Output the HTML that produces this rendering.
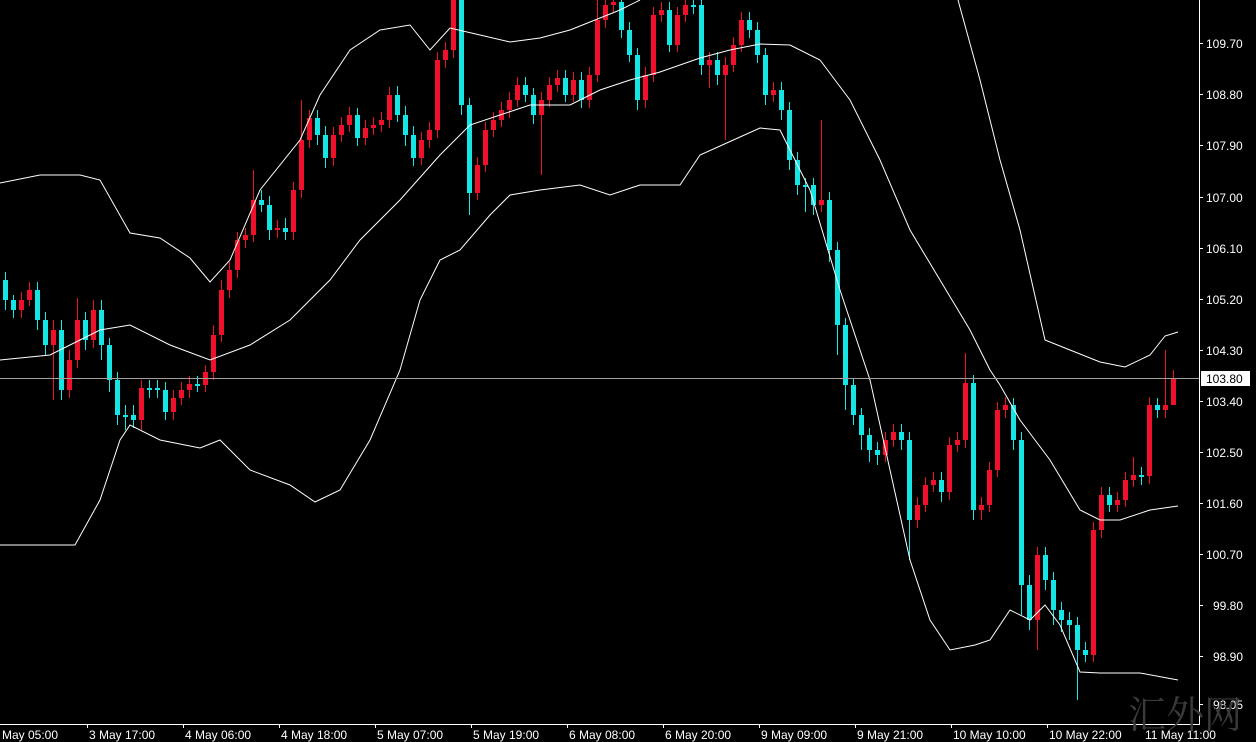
<!DOCTYPE html>
<html><head><meta charset="utf-8"><style>
html,body{margin:0;padding:0;background:#000;overflow:hidden}
svg{display:block}
text{font-family:"Liberation Sans",sans-serif;font-size:12px;fill:#fff}
</style></head><body>
<svg width="1256" height="742" xmlns="http://www.w3.org/2000/svg">
<rect width="1256" height="742" fill="#000"/>
<g stroke="#14e6e6" fill="none">
<path stroke-width="1" d="M5.5 272V310M13.5 295V318M37.5 282V330M45.5 312V355M61.5 320V400M85.5 312V350M101.5 300V360M109.5 338V392M117.5 372V425M125.5 405V430M133.5 405V428M149.5 380V398M157.5 380V398M165.5 382V420M197.5 376V392M261.5 190V212M269.5 196V240M285.5 218V240M317.5 110V145M325.5 126V168M357.5 108V146M397.5 86V122M405.5 106V146M413.5 126V166M461.5 0V115M469.5 98V215M525.5 77V102M533.5 88V124M565.5 70V102M581.5 72V108M621.5 0V38M629.5 22V62M637.5 48V110M669.5 2V52M693.5 0V14M701.5 0V75M717.5 52V85M749.5 12V38M757.5 22V63M765.5 48V105M781.5 82V120M789.5 102V170M797.5 152V195M805.5 178V212M813.5 178V215M829.5 192V262M837.5 242V355M845.5 318V410M853.5 378V425M861.5 408V450M869.5 428V462M877.5 442V465M901.5 424V450M909.5 432V560M941.5 472V502M973.5 375V520M1013.5 398V450M1021.5 432V615M1029.5 575V630M1045.5 547V590M1053.5 572V625M1061.5 602V632M1069.5 612V640M1077.5 617V700M1085.5 642V662M1109.5 487V512M1141.5 467V485M1157.5 398V418"/>
<path stroke-width="5" d="M5.5 280V300M13.5 300V310M37.5 290V320M45.5 320V345M61.5 330V390M85.5 320V340M101.5 310V345M109.5 345V380M117.5 380V415M125.5 415V417M133.5 415V420M149.5 388V390M157.5 388V390M165.5 390V412M197.5 384V386M261.5 200V205M269.5 205V230M285.5 228V232M317.5 118V135M325.5 135V158M357.5 115V138M397.5 95V115M405.5 115V135M413.5 135V158M461.5 0V105M469.5 105V193M525.5 85V95M533.5 95V115M565.5 78V95M581.5 80V100M621.5 2V30M629.5 30V55M637.5 55V100M669.5 10V45M693.5 5V7M701.5 5V65M717.5 60V75M749.5 20V30M757.5 30V55M765.5 55V95M781.5 90V110M789.5 110V160M797.5 160V185M805.5 185V187M813.5 185V205M829.5 200V250M837.5 250V325M845.5 325V385M853.5 385V415M861.5 415V435M869.5 435V450M877.5 450V455M901.5 432V440M909.5 440V520M941.5 480V492M973.5 383V510M1013.5 405V440M1021.5 440V585M1029.5 585V620M1045.5 555V580M1053.5 580V610M1061.5 610V620M1069.5 620V625M1077.5 625V650M1085.5 650V655M1109.5 495V505M1141.5 475V477M1157.5 405V410"/>
</g>
<g stroke="#f0102a" fill="none">
<path stroke-width="1" d="M21.5 292V318M29.5 282V306M53.5 320V400M69.5 350V398M77.5 298V368M93.5 300V348M141.5 380V430M173.5 390V420M181.5 382V405M189.5 376V398M205.5 365V392M213.5 325V380M221.5 280V342M229.5 262V298M237.5 232V278M245.5 228V248M253.5 170V242M277.5 220V238M293.5 182V240M301.5 100V198M309.5 110V148M333.5 127V166M341.5 117V142M349.5 107V132M365.5 120V145M373.5 117V135M381.5 112V132M389.5 87V128M421.5 132V165M429.5 122V148M437.5 52V138M445.5 42V68M453.5 0V58M477.5 157V200M485.5 122V172M493.5 112V137M501.5 102V127M509.5 92V118M517.5 77V107M541.5 92V175M549.5 77V107M557.5 70V92M573.5 72V102M589.5 67V108M597.5 0V82M605.5 0V28M613.5 0V12M645.5 67V108M653.5 7V82M661.5 2V22M677.5 7V52M685.5 0V22M709.5 52V88M725.5 57V140M733.5 37V72M741.5 12V52M773.5 82V102M821.5 120V212M885.5 432V462M893.5 424V447M917.5 497V528M925.5 477V512M933.5 472V492M949.5 437V500M957.5 432V452M965.5 353V448M981.5 497V520M989.5 462V512M997.5 402V477M1005.5 397V418M1037.5 547V650M1093.5 522V662M1101.5 487V538M1117.5 492V512M1125.5 472V507M1133.5 457V487M1149.5 397V484M1165.5 350V418M1173.5 370V398"/>
<path stroke-width="5" d="M21.5 300V310M29.5 290V300M53.5 330V345M69.5 360V390M77.5 320V360M93.5 310V340M141.5 388V420M173.5 398V412M181.5 390V398M189.5 384V390M205.5 372V385M213.5 335V372M221.5 290V335M229.5 270V290M237.5 240V270M245.5 235V240M253.5 200V235M277.5 228V230M293.5 190V232M301.5 140V190M309.5 118V140M333.5 135V158M341.5 125V135M349.5 115V125M365.5 128V138M373.5 125V128M381.5 120V125M389.5 95V120M421.5 140V158M429.5 130V140M437.5 60V130M445.5 50V60M453.5 0V50M477.5 165V193M485.5 130V165M493.5 120V130M501.5 110V120M509.5 100V110M517.5 85V100M541.5 100V115M549.5 85V100M557.5 78V85M573.5 80V95M589.5 75V100M597.5 20V75M605.5 5V20M613.5 2V5M645.5 75V100M653.5 15V75M661.5 10V15M677.5 15V45M685.5 5V15M709.5 60V65M725.5 65V75M733.5 45V65M741.5 20V45M773.5 90V95M821.5 200V205M885.5 440V455M893.5 432V440M917.5 505V520M925.5 485V505M933.5 480V485M949.5 445V492M957.5 440V445M965.5 383V440M981.5 505V510M989.5 470V505M997.5 410V470M1005.5 405V410M1037.5 555V620M1093.5 530V655M1101.5 495V530M1117.5 500V505M1125.5 480V500M1133.5 475V480M1149.5 405V476M1165.5 405V410M1173.5 378V405"/>
</g>
<g fill="none" stroke="#fff" stroke-width="1">
<polyline points="0,183 40,175 80,175 100,180 130,233 160,238 190,258 210,282 230,260 260,190 300,140 320,95 350,50 380,30 410,25 430,50 450,28 480,35 510,42 540,38 570,30 595,20 620,10 640,0"/>
<polyline points="958,0 980,80 1000,160 1020,230 1045,340 1070,350 1100,362 1125,367 1150,355 1165,336 1178,332"/>
<polyline points="0,360 50,355 80,340 100,330 130,325 170,345 210,360 250,345 290,320 330,280 360,240 400,200 440,155 470,125 500,115 530,105 570,105 600,90 630,80 660,72 700,58 730,50 760,44 790,45 820,60 850,100 880,160 910,230 940,280 970,330 990,370 1000,385 1020,420 1050,460 1080,510 1100,520 1120,520 1150,510 1178,506"/>
<polyline points="0,545 40,545 75,545 100,500 120,440 130,425 160,440 200,448 220,440 250,470 290,485 315,502 340,490 370,440 400,370 420,300 440,260 460,250 490,215 510,195 540,190 580,185 610,195 640,185 680,185 700,155 740,137 760,128 780,130 810,190 840,290 870,380 890,470 910,560 930,620 950,650 975,645 990,640 1010,610 1030,620 1045,605 1060,625 1080,672 1100,673 1140,673 1178,680"/>
</g>
<line x1="0" y1="378.5" x2="1199" y2="378.5" stroke="#a0a0a0"/>
<line x1="1199.5" y1="0" x2="1199.5" y2="724" stroke="#fff"/>
<line x1="0" y1="724.5" x2="1200" y2="724.5" stroke="#fff"/>
<path d="M1199 43.5h4M1199 94.5h4M1199 145.5h4M1199 197.5h4M1199 248.5h4M1199 299.5h4M1199 350.5h4M1199 401.5h4M1199 452.5h4M1199 503.5h4M1199 554.5h4M1199 605.5h4M1199 656.5h4M1199 704.5h4M87.5 724v4M183.5 724v4M279.5 724v4M375.5 724v4M471.5 724v4M567.5 724v4M663.5 724v4M759.5 724v4M855.5 724v4M951.5 724v4M1047.5 724v4M1143.5 724v4" stroke="#fff"/>
<text x="1206" y="48">109.70</text><text x="1206" y="99">108.80</text><text x="1206" y="150">107.90</text><text x="1206" y="202">107.00</text><text x="1206" y="253">106.10</text><text x="1206" y="304">105.20</text><text x="1206" y="355">104.30</text><text x="1206" y="406">103.40</text><text x="1206" y="457">102.50</text><text x="1206" y="508">101.60</text><text x="1206" y="559">100.70</text><text x="1213" y="610">99.80</text><text x="1213" y="661">98.90</text><text x="1213" y="709">98.05</text>
<text x="2" y="739">May 05:00</text><text x="89" y="739">3 May 17:00</text><text x="185" y="739">4 May 06:00</text><text x="281" y="739">4 May 18:00</text><text x="377" y="739">5 May 07:00</text><text x="473" y="739">5 May 19:00</text><text x="569" y="739">6 May 08:00</text><text x="665" y="739">6 May 20:00</text><text x="761" y="739">9 May 09:00</text><text x="857" y="739">9 May 21:00</text><text x="953" y="739">10 May 10:00</text><text x="1049" y="739">10 May 22:00</text><text x="1145" y="739">11 May 11:00</text>
<rect x="1201" y="371" width="49" height="15" fill="#fff"/>
<text x="1206" y="383" style="fill:#000">103.80</text>
<text x="1128" y="728" style="font-family:'Noto Serif CJK SC',serif;font-size:38px;fill:#3a3a3a">汇外网</text>
</svg>
</body></html>
